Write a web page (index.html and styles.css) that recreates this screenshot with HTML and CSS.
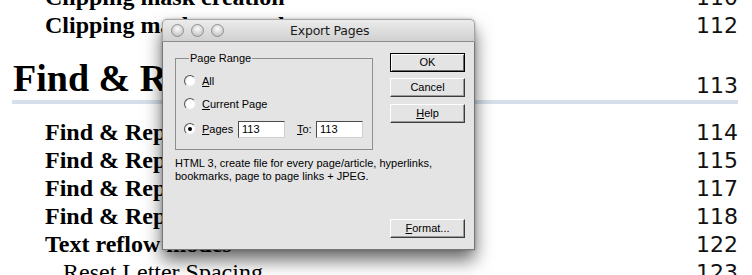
FILE: index.html
```html
<!DOCTYPE html>
<html>
<head>
<meta charset="utf-8">
<link rel="stylesheet" href="styles.css">
</head>
<body>
<div class="page">
  <div class="toc">
    <div class="row"><span class="t">Clipping mask creation</span><span class="n">110</span></div>
    <div class="row"><span class="t">Clipping mask removal</span><span class="n">112</span></div>
    <div class="row head"><span class="t">Find &amp; Replace</span><span class="n">113</span></div>
    <div class="row first"><span class="t">Find &amp; Replace text</span><span class="n">114</span></div>
    <div class="row"><span class="t">Find &amp; Replace styles</span><span class="n">115</span></div>
    <div class="row"><span class="t">Find &amp; Replace fonts</span><span class="n">117</span></div>
    <div class="row"><span class="t">Find &amp; Replace colors</span><span class="n">118</span></div>
    <div class="row"><span class="t">Text reflow modes</span><span class="n">122</span></div>
    <div class="row sub"><span class="t">Reset Letter Spacing</span><span class="n">123</span></div>
  </div>

  <div class="dialog">
    <div class="titlebar">
      <div class="lights"><span></span><span></span><span></span></div>
      <div class="title">Export Pages</div>
    </div>
    <div class="dbody">
      <fieldset class="range">
        <legend>Page Range</legend>
        <div class="opt"><span class="radio"></span><span class="lbl"><u>A</u>ll</span></div>
        <div class="opt"><span class="radio"></span><span class="lbl"><u>C</u>urrent Page</span></div>
        <div class="opt pages">
          <span class="radio on"></span><span class="lbl plbl"><u>P</u>ages</span>
          <span class="field">113</span>
          <span class="lbl tolbl"><u>T</u>o:</span>
          <span class="field">113</span>
        </div>
      </fieldset>
      <div class="buttons">
        <div class="btn default">OK</div>
        <div class="btn">Cancel</div>
        <div class="btn help"><u>H</u>elp</div>
      </div>
      <p class="desc">HTML 3, create file for every page/article, hyperlinks, bookmarks, page to page links + JPEG.</p>
      <div class="btn format"><u>F</u>ormat...</div>
    </div>
  </div>
</div>
</body>
</html>
```

FILE: styles.css
```css
html, body {
  margin: 0;
  padding: 0;
  background: #ffffff;
}
body {
  width: 752px;
  height: 275px;
  overflow: hidden;
}
.page {
  position: relative;
  width: 752px;
  height: 275px;
  overflow: hidden;
}

/* background table of contents */
.toc {
  margin-top: -17px;
  padding-right: 14px;
}
.row {
  display: flex;
  justify-content: space-between;
  align-items: baseline;
  height: 28px;
  line-height: 28px;
  padding-left: 45px;
}
.row .t {
  font-family: "Liberation Serif", "Times New Roman", serif;
  font-weight: bold;
  font-size: 24px;
  color: #000;
  white-space: nowrap;
}
.row .n {
  font-family: "DejaVu Sans", Verdana, sans-serif;
  font-size: 22px;
  color: #111;
}
.row.head {
  margin-top: 21px;
  margin-left: 12px;
  padding-left: 1px;
  height: 40px;
  line-height: 40px;
  align-items: flex-end;
  border-bottom: 4px solid #d4dfe9;
}
.row.head .t {
  font-size: 38px;
  line-height: 44px;
}
.row.head .n {
  line-height: 28px;
}
.row.first {
  margin-top: 14px;
}
.row.sub {
  padding-left: 63px;
}
.row.sub .t {
  font-weight: normal;
}

/* dialog window */
.dialog {
  position: absolute;
  left: 162px;
  top: 19px;
  width: 313px;
  height: 231px;
  border-radius: 5px 5px 0 0;
  box-shadow: 0 10px 18px rgba(0, 0, 0, 0.6), 0 0 3px rgba(0, 0, 0, 0.25);
  font-family: "Liberation Sans", Arial, sans-serif;
  font-size: 11px;
  color: #000;
}
.titlebar {
  display: flex;
  align-items: center;
  border: 1px solid #a6a6a6;
  border-bottom-color: #8c8c8c;
  border-radius: 5px 5px 0 0;
  background: linear-gradient(#ececec, #d0d0d0);
  height: 21px;
  padding-left: 8px;
}
.lights {
  display: flex;
  gap: 7px;
}
.lights span {
  width: 11px;
  height: 11px;
  border-radius: 50%;
  border: 1px solid #8f8f8f;
  background: radial-gradient(circle at 50% 35%, #fbfbfb 0%, #dcdcdc 45%, #b5b5b5 100%);
}
.title {
  margin-left: 66px;
  font-family: "DejaVu Sans", "Lucida Grande", sans-serif;
  font-size: 12.5px;
  color: #1a1a1a;
  letter-spacing: -0.2px;
}

.dbody {
  box-sizing: border-box;
  height: 208px;
  background: #e4e4e4;
  border: 1px solid #777;
  border-top: none;
  padding: 10px 9px 11px 12px;
  display: grid;
  grid-template-columns: 198px 75px;
  grid-template-rows: auto auto 1fr;
  column-gap: 17px;
}

.range {
  grid-column: 1;
  grid-row: 1;
  margin: 0;
  min-width: 0;
  border: 1px solid #8e8e8e;
  padding: 6px 0 10px 8px;
}
.range legend {
  margin-left: 5px;
  padding: 0 1px;
  line-height: 13px;
  font-size: 11px;
}
.opt {
  display: flex;
  align-items: center;
  height: 20px;
}
.opt + .opt {
  margin-top: 3px;
}
.opt.pages {
  margin-top: 5px;
}
.radio {
  width: 10px;
  height: 10px;
  border-radius: 50%;
  border: 1px solid;
  border-color: #555 #e8e8e8 #e8e8e8 #555;
  background: radial-gradient(circle at 55% 55%, #ffffff 45%, #d8d8d8 100%);
  display: flex;
  align-items: center;
  justify-content: center;
  flex: none;
}
.radio.on::after {
  content: "";
  width: 4px;
  height: 4px;
  border-radius: 50%;
  background: #000;
}
.lbl {
  margin-left: 6px;
  white-space: nowrap;
}
.plbl {
  width: 36px;
}
.field {
  box-sizing: border-box;
  width: 47px;
  height: 17px;
  line-height: 15px;
  padding-left: 3px;
  background: #fff;
  border: 1px solid;
  border-color: #4a4a4a #cfcfcf #cfcfcf #4a4a4a;
}
.tolbl {
  margin-left: 12px;
  width: 19px;
}

.buttons {
  grid-column: 2;
  grid-row: 1;
  margin-top: 1px;
  display: flex;
  flex-direction: column;
  gap: 6px;
}
.btn {
  box-sizing: border-box;
  height: 19px;
  width: 75px;
  line-height: 17px;
  text-align: center;
  background: #e4e4e4;
  border: 1px solid;
  border-color: #ffffff #3c3c3c #3c3c3c #ffffff;
  box-shadow: inset -1px -1px 0 #9a9a9a;
  white-space: nowrap;
}
.btn.default {
  border: 1px solid #000;
  box-shadow: inset 1px 1px 0 #ffffff, inset -1px -1px 0 #6a6a6a;
}
.btn.help {
  margin-top: 1px;
}
.desc {
  grid-column: 1 / 3;
  grid-row: 2;
  margin: 7px 0 0 0;
  line-height: 13px;
  font-size: 11px;
}
.btn.format {
  grid-column: 2;
  grid-row: 3;
  align-self: end;
}
```
